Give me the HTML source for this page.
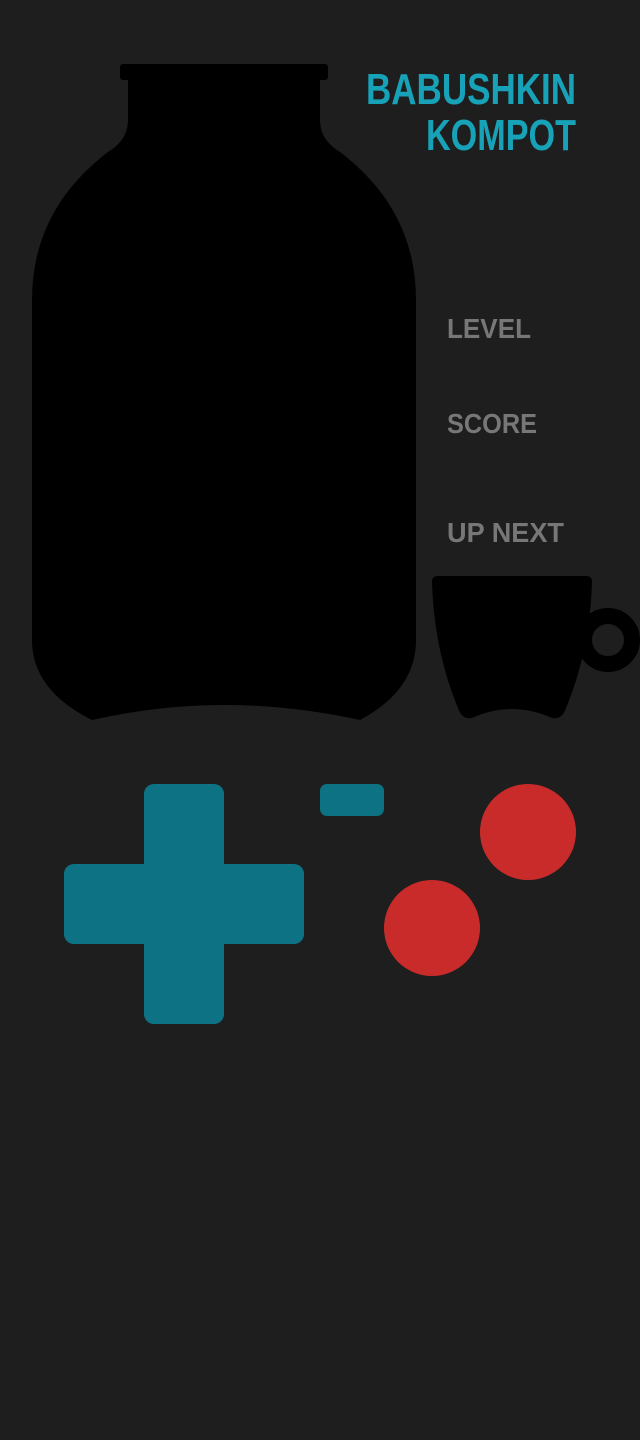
<!DOCTYPE html>
<html><head><meta charset="utf-8"><style>
html,body{margin:0;padding:0;background:#1e1e1e;width:640px;height:1440px;overflow:hidden}
svg{display:block}
.t{font-family:"Liberation Sans",sans-serif;font-weight:bold;}
</style></head><body>
<svg width="640" height="1440" viewBox="0 0 640 1440">
<rect width="640" height="1440" fill="#1e1e1e"/>
<!-- jar -->
<rect x="120" y="64" width="208" height="16" rx="3" fill="#000"/>
<path d="M128 78 H320 V120 Q320 140 340 152 Q416 210 416 300 V640 Q416 690 360 720 Q224 690 92 720 Q32 690 32 640 V300 Q32 210 108 152 Q128 140 128 120 Z" fill="#000"/>
<!-- cup -->
<circle cx="608" cy="640" r="24" fill="none" stroke="#000" stroke-width="16"/>
<path d="M438 576 H586 Q592 576 592 582 Q590 650 566 708 Q562 720 552 718 Q512 700 472 718 Q462 720 458 708 Q434 650 432 582 Q432 576 438 576 Z" fill="#000"/>
<!-- logo -->
<text class="t" x="366" y="104" font-size="44" fill="#17a2b8" textLength="210" lengthAdjust="spacingAndGlyphs" style="font-family:'Liberation Sans Narrow','Liberation Sans',sans-serif">BABUSHKIN</text>
<text class="t" x="426" y="150" font-size="44" fill="#17a2b8" textLength="150" lengthAdjust="spacingAndGlyphs" style="font-family:'Liberation Sans Narrow','Liberation Sans',sans-serif">KOMPOT</text>
<!-- labels -->
<text class="t" x="447" y="338" font-size="28" fill="#777" textLength="84" lengthAdjust="spacingAndGlyphs" font-weight="normal">LEVEL</text>
<text class="t" x="447" y="433" font-size="28" fill="#777" textLength="90" lengthAdjust="spacingAndGlyphs" font-weight="normal">SCORE</text>
<text class="t" x="447" y="542" font-size="28" fill="#777" textLength="117" lengthAdjust="spacingAndGlyphs" font-weight="normal">UP NEXT</text>
<!-- controls -->
<rect x="144" y="784" width="80" height="240" rx="10" fill="#0e7285"/>
<rect x="64" y="864" width="240" height="80" rx="10" fill="#0e7285"/>
<rect x="320" y="784" width="64" height="32" rx="7" fill="#0e7285"/>
<circle cx="528" cy="832" r="48" fill="#c92b2b"/>
<circle cx="432" cy="928" r="48" fill="#c92b2b"/>
</svg>
</body></html>
